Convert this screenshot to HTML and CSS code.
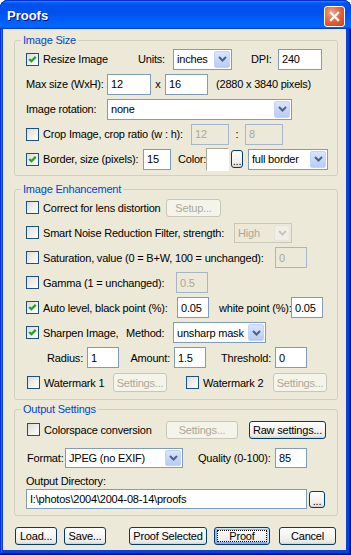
FILE: index.html
```html
<!DOCTYPE html>
<html lang="en">

<head>
    <meta charset="UTF-8" />
    <title>Proofs</title>
    <link rel="stylesheet" href="styles.css">
</head>

<body>
    <div class="window">
        <div class="title-bar">
            <span class="title">Proofs</span>
            <span class="close-btn">
                <svg viewBox="0 0 21 21" width="21" height="21">
                    <path d="M6.5 6.5 L14.5 14.5 M14.5 6.5 L6.5 14.5" stroke="#fff" stroke-width="2.4" stroke-linecap="square" />
                </svg>
            </span>
        </div>

        <div class="client">
            <!-- Image Size -->
            <fieldset class="group">
                <legend>Image Size</legend>
                <div class="rows rows-size">
                    <div class="row">
                        <label class="chk w112"><span class="box on"><svg viewBox="0 0 11 11"><path d="M2.3 5 L4.4 7.2 L8.7 2.9" /></svg></span>Resize Image</label>
                        <span class="lbl w35">Units:</span>
                        <div class="combo w59"><span class="val">inches</span><span class="drop"><svg viewBox="0 0 9 6"><path d="M1 1 L4.5 4.5 L8 1" /></svg></span></div>
                        <span class="lbl w27 ml19">DPI:</span>
                        <input class="field w44" type="text" value="240">
                    </div>
                    <div class="row">
                        <span class="lbl w81">Max size (WxH):</span>
                        <input class="field w44" type="text" value="12">
                        <span class="lbl w14 center">x</span>
                        <input class="field w43" type="text" value="16">
                        <span class="lbl ml8">(2880 x 3840 pixels)</span>
                    </div>
                    <div class="row">
                        <span class="lbl w81">Image rotation:</span>
                        <div class="combo w185"><span class="val">none</span><span class="drop"><svg viewBox="0 0 9 6"><path d="M1 1 L4.5 4.5 L8 1" /></svg></span></div>
                    </div>
                    <div class="row">
                        <label class="chk w165"><span class="box"></span>Crop Image, crop ratio (w : h):</label>
                        <input class="field w38" type="text" value="12" disabled>
                        <span class="lbl w16 center">:</span>
                        <input class="field w38" type="text" value="8" disabled>
                    </div>
                    <div class="row">
                        <label class="chk w117"><span class="box on"><svg viewBox="0 0 11 11"><path d="M2.3 5 L4.4 7.2 L8.7 2.9" /></svg></span>Border, size (pixels):</label>
                        <input class="field w28" type="text" value="15">
                        <span class="lbl w28 ml7">Color:</span>
                        <span class="swatch"></span>
                        <button class="btn mini">...</button>
                        <div class="combo w80 ml5"><span class="val">full border</span><span class="drop"><svg viewBox="0 0 9 6"><path d="M1 1 L4.5 4.5 L8 1" /></svg></span></div>
                    </div>
                </div>
            </fieldset>

            <!-- Image Enhancement -->
            <fieldset class="group group-enh">
                <legend>Image Enhancement</legend>
                <div class="rows rows-enh">
                    <div class="row">
                        <label class="chk w140"><span class="box"></span>Correct for lens distortion</label>
                        <button class="btn w55" disabled>Setup...</button>
                    </div>
                    <div class="row">
                        <label class="chk w208"><span class="box"></span>Smart Noise Reduction Filter, strength:</label>
                        <div class="combo w58 off"><span class="val">High</span><span class="drop"><svg viewBox="0 0 9 6"><path d="M1 1 L4.5 4.5 L8 1" /></svg></span></div>
                    </div>
                    <div class="row">
                        <label class="chk w249"><span class="box"></span>Saturation, value (0 = B+W, 100 = unchanged):</label>
                        <input class="field w32" type="text" value="0" disabled>
                    </div>
                    <div class="row">
                        <label class="chk w150"><span class="box"></span>Gamma (1 = unchanged):</label>
                        <input class="field w32" type="text" value="0.5" disabled>
                    </div>
                    <div class="row">
                        <label class="chk w151"><span class="box on"><svg viewBox="0 0 11 11"><path d="M2.3 5 L4.4 7.2 L8.7 2.9" /></svg></span>Auto level, black point (%):</label>
                        <input class="field w32" type="text" value="0.05">
                        <span class="lbl w72 ml10">white point (%):</span>
                        <input class="field w32" type="text" value="0.05">
                    </div>
                    <div class="row">
                        <label class="chk w100"><span class="box on"><svg viewBox="0 0 11 11"><path d="M2.3 5 L4.4 7.2 L8.7 2.9" /></svg></span>Sharpen Image,</label>
                        <span class="lbl w47">Method:</span>
                        <div class="combo w93"><span class="val">unsharp mask</span><span class="drop"><svg viewBox="0 0 9 6"><path d="M1 1 L4.5 4.5 L8 1" /></svg></span></div>
                    </div>
                    <div class="row">
                        <span class="lbl w61 right">Radius:</span>
                        <input class="field w32" type="text" value="1">
                        <span class="lbl w55 right">Amount:</span>
                        <input class="field w32" type="text" value="1.5">
                        <span class="lbl w69 right">Threshold:</span>
                        <input class="field w32" type="text" value="0">
                    </div>
                    <div class="row">
                        <label class="chk w86 ml1"><span class="box"></span>Watermark 1</label>
                        <button class="btn w54 tall" disabled>Settings...</button>
                        <label class="chk w87 ml19"><span class="box"></span>Watermark 2</label>
                        <button class="btn w54 tall" disabled>Settings...</button>
                    </div>
                </div>
            </fieldset>

            <!-- Output Settings -->
            <fieldset class="group group-out">
                <legend>Output Settings</legend>
                <div class="rows rows-out">
                    <div class="row row-top">
                        <label class="chk w139 ml1"><span class="box"></span>Colorspace conversion</label>
                        <button class="btn w72" disabled>Settings...</button>
                        <button class="btn w77 ml11">Raw settings...</button>
                    </div>
                    <div class="row row-format">
                        <span class="lbl w38 ml1">Format:</span>
                        <div class="combo w118"><span class="val">JPEG (no EXIF)</span><span class="drop"><svg viewBox="0 0 9 6"><path d="M1 1 L4.5 4.5 L8 1" /></svg></span></div>
                        <span class="lbl w77 ml15">Quality (0-100):</span>
                        <input class="field w32" type="text" value="85">
                    </div>
                    <div class="dir-label">Output Directory:</div>
                    <div class="row row-dir">
                        <input class="field w281" type="text" value="I:\photos\2004\2004-08-14\proofs">
                        <button class="btn dots ml2">...</button>
                    </div>
                </div>
            </fieldset>

            <div class="buttons">
                <button class="btn w42">Load...</button>
                <button class="btn w42 ml7">Save...</button>
                <button class="btn w78 ml23">Proof Selected</button>
                <button class="btn w56 ml7 default">Proof</button>
                <button class="btn w57 ml9">Cancel</button>
            </div>
        </div>
    </div>
</body>

</html>
```

FILE: styles.css
```css
* {
    box-sizing: border-box;
}

body {
    margin: 0;
    background: #fff;
    font-family: 'Liberation Sans', Arial, sans-serif;
    font-size: 11px;
    letter-spacing: -0.2px;
    color: #000;
}

.window {
    width: 351px;
    height: 555px;
    display: flex;
    flex-direction: column;
    background: #0842d6;
    border-radius: 8px 8px 0 0;
    box-shadow: inset -1px -1px #00138c, inset 1px 1px #0831d9, inset -2px -2px #001ea0, inset 2px 2px #166aee;
}

.title-bar {
    height: 29px;
    flex-shrink: 0;
    display: flex;
    align-items: center;
    justify-content: space-between;
    padding: 0 6px 0 7px;
    background: linear-gradient(180deg, #0997ff, #0053ee 8%, #0050ee 40%, #06f 88%, #06f 93%, #005bff 95%, #003dd7 96%, #003dd7);
    border-radius: 8px 8px 0 0;
    border-top: 1px solid #0831d9;
}

.title {
    color: #fff;
    font-size: 13px;
    font-weight: bold;
    letter-spacing: 0;
    text-shadow: 1px 1px #0f1089;
    margin-top: 1px;
}

.close-btn {
    width: 21px;
    height: 21px;
    margin-top: 2px;
    border: 1px solid #fff;
    border-radius: 3px;
    display: flex;
    align-items: center;
    justify-content: center;
    background: radial-gradient(circle at 35% 30%, #f3a48c 0%, #e4663f 45%, #c8401c 100%);
}

.close-btn svg {
    width: 19px;
    height: 19px;
}

.client {
    flex: 1;
    margin: 0 5px 5px 3px;
    background: #ece9d8;
    padding-top: 4px;
}

.group {
    margin: 0 0 0 11px;
    width: 324px;
    min-width: 0;
    border: 1px solid #d0d0bf;
    border-radius: 3px;
    padding: 1px 0 5px 11px;
}

.group legend {
    color: #0046d5;
    line-height: 14px;
    padding: 0 2px;
    margin-left: -5px;
}

.group-enh {
    margin-top: 6px;
    padding-bottom: 6px;
}

.group-out {
    margin-top: 2px;
    padding-top: 4px;
    padding-bottom: 6px;
}

.rows {
    display: flex;
    flex-direction: column;
}

.rows-size {
    gap: 3px;
}

.rows-size .row {
    height: 22px;
}

.rows-enh {
    gap: 4px;
}

.rows-enh .row {
    height: 21px;
}

.row {
    display: flex;
    align-items: center;
    white-space: nowrap;
}

.row-top {
    height: 19px;
}

.row-format {
    height: 20px;
    margin-top: 9px;
}

.dir-label {
    height: 14px;
    line-height: 14px;
    margin-top: 6px;
}

.row-dir {
    height: 20px;
    margin-top: 1px;
}

/* labels */
.lbl {
    flex-shrink: 0;
}

.center {
    text-align: center;
}

.right {
    text-align: right;
    padding-right: 4px;
}

.chk {
    display: flex;
    align-items: center;
    gap: 4px;
    flex-shrink: 0;
}

.box {
    width: 13px;
    height: 13px;
    flex-shrink: 0;
    border: 1px solid #1c5180;
    background: linear-gradient(135deg, #dcdcd7, #fff);
}

.box svg {
    display: block;
    width: 11px;
    height: 11px;
}

.box svg path {
    fill: none;
    stroke: #21a121;
    stroke-width: 2.3;
}

/* edit boxes */
.field {
    height: 21px;
    flex-shrink: 0;
    border: 1px solid #7f9db9;
    background: #fff;
    padding: 0 3px;
    margin: 0;
    font-family: inherit;
    font-size: 11px;
    letter-spacing: inherit;
    color: #000;
    outline: none;
}

.rows-out .field {
    height: 20px;
}

.field:disabled {
    background: #ece9d8;
    border-color: #a5b6ca;
    color: #aca899;
}

/* combo boxes */
.combo {
    height: 21px;
    flex-shrink: 0;
    display: flex;
    align-items: stretch;
    border: 1px solid #7f9db9;
    background: #fff;
    padding: 1px;
}

.rows-out .combo,
.combo.off {
    height: 20px;
}

.combo .val {
    flex: 1;
    padding-left: 2px;
    display: flex;
    align-items: center;
}

.combo .drop {
    width: 16px;
    display: flex;
    align-items: center;
    justify-content: center;
    border: 1px solid #c3d3fd;
    border-radius: 2px;
    background: linear-gradient(180deg, #d9e5fd, #b6cbf6);
}

.combo .drop svg {
    width: 9px;
    height: 6px;
}

.combo .drop path {
    fill: none;
    stroke: #4d6185;
    stroke-width: 2;
}

.combo.off {
    border-color: #c9c7ba;
    background: #ece9d8;
    color: #aca899;
}

.combo.off .drop {
    border-color: #e6e4da;
    background: #f0efe7;
}

.combo.off .drop path {
    stroke: #c9c7ba;
}

.swatch {
    width: 23px;
    height: 23px;
    flex-shrink: 0;
    background: #fff;
    border: 1px solid;
    border-color: #aca899 #fff #fff #aca899;
}

/* push buttons */
.btn {
    height: 18px;
    flex-shrink: 0;
    padding: 0;
    margin: 0;
    font-family: inherit;
    font-size: 11px;
    letter-spacing: inherit;
    color: #000;
    border: 1px solid #003c74;
    border-radius: 3px;
    background: linear-gradient(180deg, #fff, #ecebe6 86%, #d6d0c5);
    white-space: nowrap;
}

.btn.tall {
    height: 19px;
}

.btn:disabled {
    border-color: #c9c7ba;
    background: #f5f4ea;
    color: #aca899;
}

.btn.mini {
    width: 12px;
    margin-left: 2px;
    line-height: 10px;
    padding-top: 4px;
}

.btn.dots {
    width: 16px;
    height: 17px;
    line-height: 10px;
    padding-top: 3px;
}

.btn.default {
    box-shadow: inset -1px 1px #cee7ff, inset 1px 2px #98b8ea, inset -2px 2px #bcd4f6, inset 1px -1px #89ade4, inset 2px -2px #89ade4;
    outline: 1px dotted #000;
    outline-offset: -4px;
}

.buttons {
    display: flex;
    margin: 11px 0 0 12px;
}

/* widths */
.w14 { width: 14px; }
.w16 { width: 16px; }
.w27 { width: 27px; }
.w28 { width: 28px; }
.w32 { width: 32px; }
.w35 { width: 35px; }
.w38 { width: 38px; }
.w42 { width: 42px; }
.w43 { width: 43px; }
.w44 { width: 44px; }
.w47 { width: 47px; }
.w54 { width: 54px; }
.w55 { width: 55px; }
.w56 { width: 56px; }
.w57 { width: 57px; }
.w58 { width: 58px; }
.w59 { width: 59px; }
.w61 { width: 61px; }
.w69 { width: 69px; }
.w72 { width: 72px; }
.w77 { width: 77px; }
.w78 { width: 78px; }
.w80 { width: 80px; }
.w81 { width: 81px; }
.w86 { width: 86px; }
.w87 { width: 87px; }
.w93 { width: 93px; }
.w100 { width: 100px; }
.w112 { width: 112px; }
.w117 { width: 117px; }
.w118 { width: 118px; }
.w139 { width: 139px; }
.w140 { width: 140px; }
.w150 { width: 150px; }
.w151 { width: 151px; }
.w165 { width: 165px; }
.w185 { width: 185px; }
.w208 { width: 208px; }
.w249 { width: 249px; }
.w281 { width: 281px; }

/* margins */
.ml1 { margin-left: 1px; }
.ml2 { margin-left: 2px; }
.ml5 { margin-left: 5px; }
.ml7 { margin-left: 7px; }
.ml8 { margin-left: 8px; }
.ml9 { margin-left: 9px; }
.ml10 { margin-left: 10px; }
.ml11 { margin-left: 11px; }
.ml15 { margin-left: 15px; }
.ml19 { margin-left: 19px; }
.ml23 { margin-left: 23px; }
```
